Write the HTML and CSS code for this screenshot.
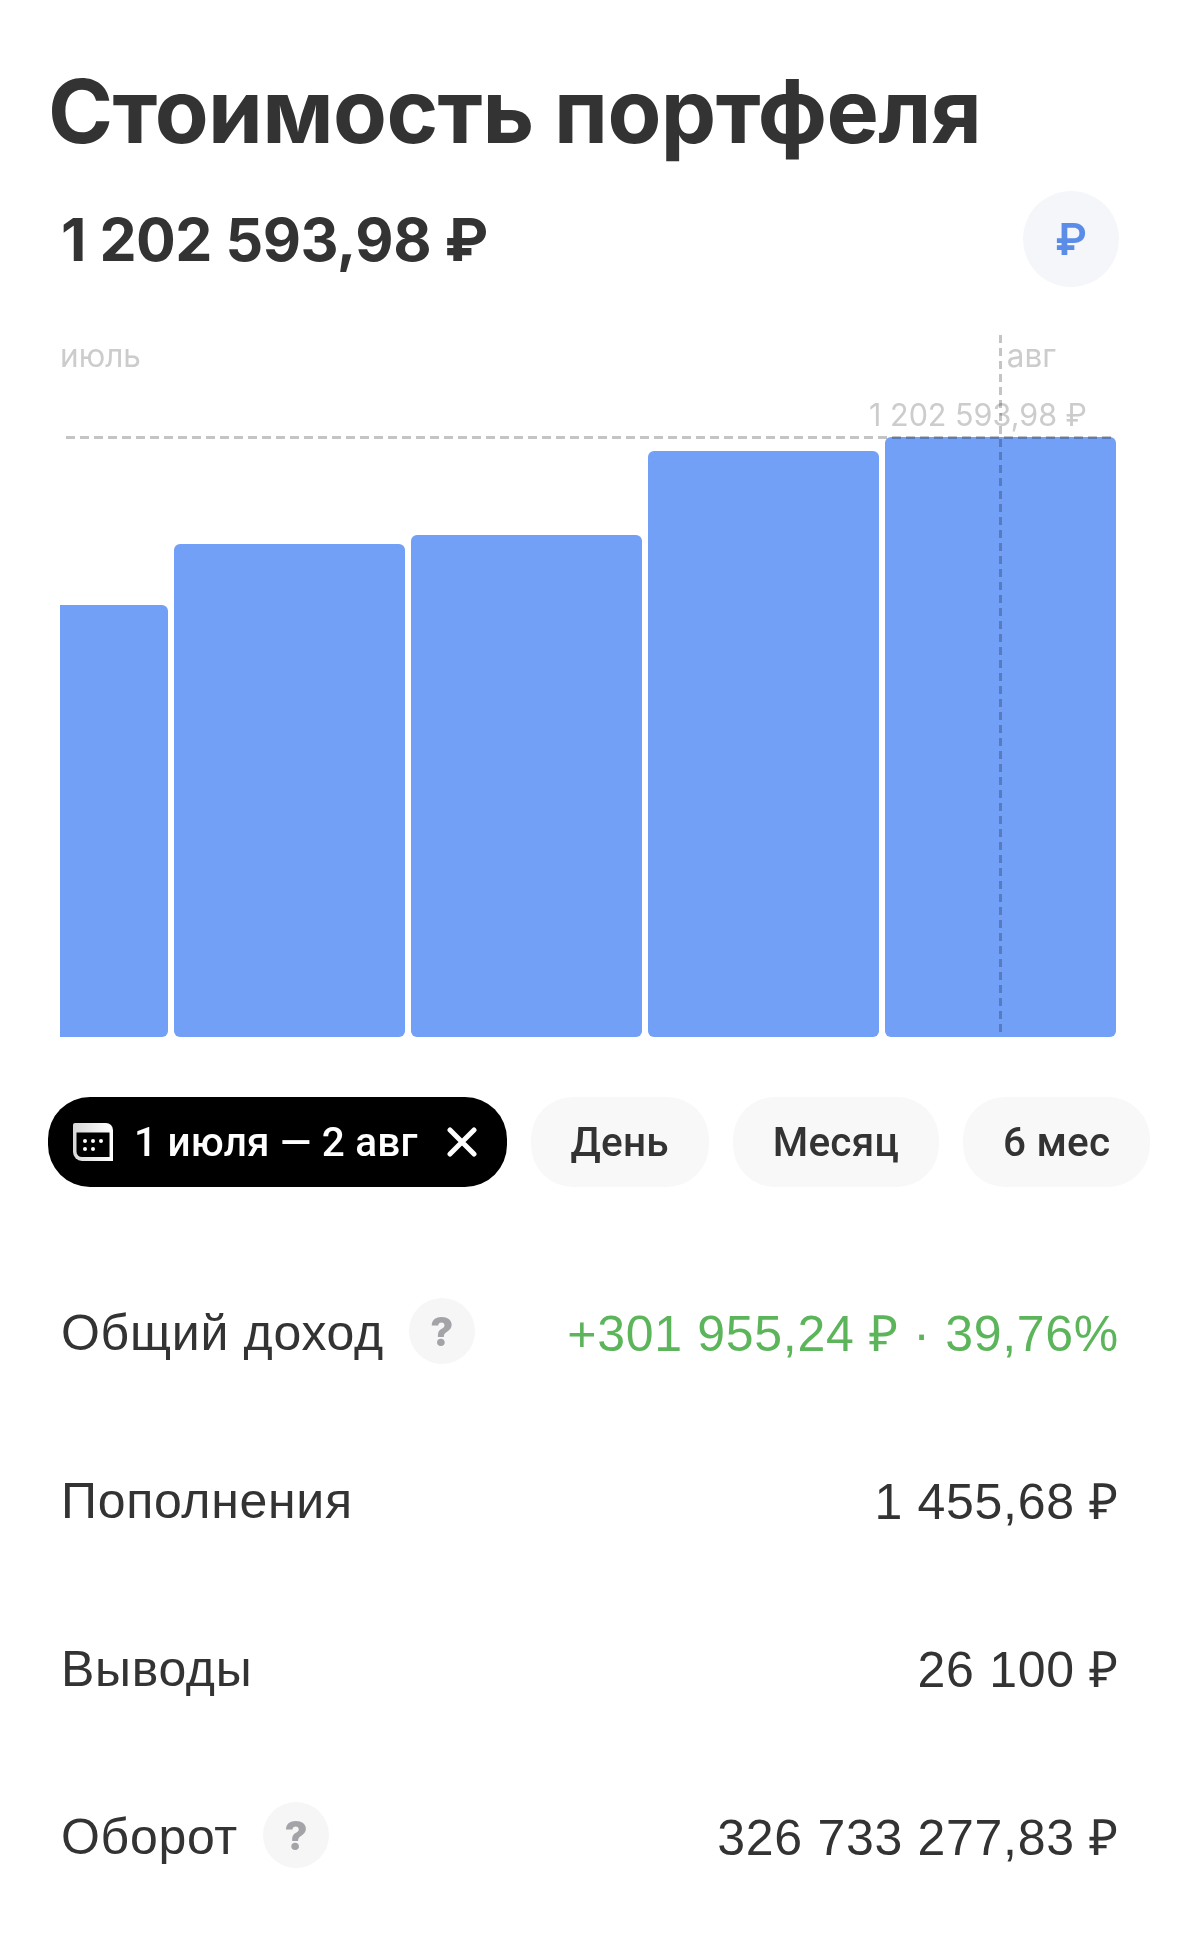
FILE: index.html
```html
<!DOCTYPE html>
<html lang="ru">
<head>
    <meta charset="UTF-8">
    <title>Стоимость портфеля</title>
    <link rel="stylesheet" href="styles.css">
</head>
<body>
    <div class="page">
        <h1 class="title">Стоимость портфеля</h1>

        <div class="total-row">
            <div class="total">1 202 593,98 ₽</div>
            <div class="currency-btn">₽</div>
        </div>

        <div class="chart">
            <div class="month-labels">
                <span>июль</span>
                <span class="month-aug">авг</span>
            </div>
            <div class="plot">
                <div class="max-label">1 202 593,98 ₽</div>
                <div class="bars">
                    <div class="bar bar-cut" style="height: 432px"></div>
                    <div class="bar" style="height: 493px"></div>
                    <div class="bar" style="height: 502px"></div>
                    <div class="bar" style="height: 586px"></div>
                    <div class="bar" style="height: 600px"></div>
                </div>
                <div class="max-line"></div>
            </div>
            <div class="cursor-line"></div>
        </div>

        <div class="chips">
            <div class="chip chip-active">
                <svg class="chip-calendar" width="40" height="38" viewBox="0 0 40 38">
                    <defs>
                        <linearGradient id="cal-top" x1="0" x2="1" y1="0" y2="0">
                            <stop offset="0" stop-color="#d8d8d8"/>
                            <stop offset="1" stop-color="#fff"/>
                        </linearGradient>
                    </defs>
                    <path d="M2 0H33A7 7 0 0 1 40 7V38H9A9 9 0 0 1 0 29V2A2 2 0 0 1 2 0Z" fill="url(#cal-top)"/>
                    <path d="M3.5 9.5H36.5V34H9A5.5 5.5 0 0 1 3.5 28.5Z" fill="#000"/>
                    <g fill="#fff">
                        <circle cx="12" cy="18" r="2"/>
                        <circle cx="20" cy="18" r="2"/>
                        <circle cx="28" cy="18" r="2"/>
                        <circle cx="12" cy="26" r="2"/>
                        <circle cx="20" cy="26" r="2"/>
                    </g>
                </svg>
                <span>1 июля — 2 авг</span>
                <svg class="chip-close" width="30" height="30" viewBox="0 0 30 30">
                    <path d="M3 3L27 27M27 3L3 27" stroke="#fff" stroke-width="5" stroke-linecap="round"/>
                </svg>
            </div>
            <div class="chip">День</div>
            <div class="chip">Месяц</div>
            <div class="chip">6 мес</div>
        </div>

        <div class="stats">
            <div class="stat-row">
                <div class="stat-name">Общий доход <span class="hint">?</span></div>
                <div class="stat-value stat-green">+301 955,24 ₽ · 39,76%</div>
            </div>
            <div class="stat-row">
                <div class="stat-name">Пополнения</div>
                <div class="stat-value">1 455,68 ₽</div>
            </div>
            <div class="stat-row">
                <div class="stat-name">Выводы</div>
                <div class="stat-value">26 100 ₽</div>
            </div>
            <div class="stat-row">
                <div class="stat-name">Оборот <span class="hint">?</span></div>
                <div class="stat-value">326 733 277,83 ₽</div>
            </div>
        </div>
    </div>
</body>
</html>
```
FILE: styles.css
```css
body {
    margin: 0;
    font-family: Inter, "Liberation Sans", sans-serif;
    background-color: #fff;
    color: #333;
}

.page {
    height: 1942px;
    overflow: hidden;
}

.title {
    margin: 0;
    padding: 58px 0 0 48px;
    font-size: 88px;
    line-height: 106px;
    font-weight: 700;
    letter-spacing: -0.6px;
    white-space: nowrap;
}

.total-row {
    display: flex;
    justify-content: space-between;
    align-items: center;
    padding: 27px 60px 0 61px;
}

.total {
    font-size: 59px;
    font-weight: 700;
    letter-spacing: -0.5px;
}

.currency-btn {
    width: 96px;
    height: 96px;
    border-radius: 50%;
    background-color: #f4f6fa;
    color: #5b8de8;
    font-size: 44px;
    font-weight: 600;
    display: flex;
    align-items: center;
    justify-content: center;
}

/* chart */
.chart {
    position: relative;
    margin: 48px 63px 0 60px;
}

.month-labels {
    display: flex;
    height: 42px;
    font-size: 31.5px;
    line-height: 42px;
    color: #ccc;
}

.month-aug {
    margin-left: auto;
    margin-right: 60px;
}

.plot {
    position: relative;
    height: 660px;
    display: flex;
    flex-direction: column;
    justify-content: flex-end;
}

.bars {
    display: flex;
    align-items: flex-end;
    gap: 6px;
}

.bar {
    width: 231px;
    flex: none;
    background-color: #72a0f7;
    border-radius: 6px;
}

.bar-cut {
    width: 108px;
    border-radius: 0 6px 6px 0;
}

.max-label {
    position: absolute;
    right: 29px;
    top: 18px;
    font-size: 30.5px;
    line-height: 40px;
    color: #ccc;
}

.max-line {
    position: absolute;
    left: 6px;
    right: 0;
    top: 59px;
    height: 3px;
    background-image: repeating-linear-gradient(to right, #c4c4c4 0 9px, transparent 9px 14px);
    mix-blend-mode: multiply;
}

.cursor-line {
    position: absolute;
    left: 939px;
    top: 0;
    bottom: 0;
    width: 3px;
    background-image: repeating-linear-gradient(to bottom, #c4c4c4 0 8px, transparent 8px 13px);
    mix-blend-mode: multiply;
}

/* period chips */
.chips {
    display: flex;
    gap: 24px;
    margin: 60px 0 0 48px;
}

.chip {
    flex: none;
    height: 90px;
    padding: 0 40px;
    border-radius: 42px;
    background-color: #f8f8f8;
    display: flex;
    align-items: center;
    font-family: Roboto, sans-serif;
    font-size: 40.5px;
    font-weight: 500;
    letter-spacing: 0.2px;
    white-space: nowrap;
}

.chip-active {
    padding: 0 30px 0 25px;
    background-color: #000;
    color: #fff;
}

.chip-calendar {
    margin-right: 21px;
}

.chip-close {
    margin-left: 29px;
}

/* stats */
.stats {
    margin-top: 62px;
    padding: 0 60px 0 61px;
    font-family: "Liberation Sans", Arial, sans-serif;
}

.stat-row {
    height: 168px;
    display: flex;
    justify-content: space-between;
    align-items: center;
    font-size: 50px;
    letter-spacing: 0.7px;
    white-space: nowrap;
}

.stat-name {
    display: flex;
    align-items: center;
    gap: 25px;
}

.stat-value {
    margin-bottom: 2px;
}

.stat-green {
    color: #5cb55a;
}

.hint {
    width: 66px;
    height: 66px;
    margin-bottom: 4px;
    border-radius: 50%;
    background-color: #f6f6f6;
    color: #a3a3a8;
    font-family: Inter, sans-serif;
    font-size: 40px;
    font-weight: 800;
    letter-spacing: 0;
    display: flex;
    align-items: center;
    justify-content: center;
}
```
